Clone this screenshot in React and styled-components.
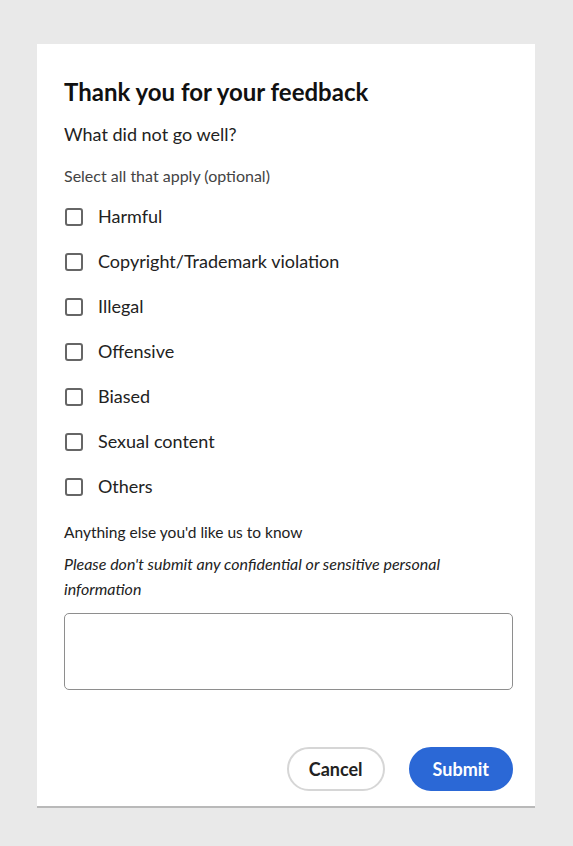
import React from 'react'
import styled, { createGlobalStyle } from 'styled-components'

const Global = createGlobalStyle`
  body {
    margin: 0;
    background: #e9e9e9;
    font-family: Lato, "Open Sans", sans-serif;
    color: #222;
  }
`

const Page = styled.div`
  padding: 44px 38px 0 37px;
`

const Card = styled.div`
  background: #fff;
  width: 498px;
  box-sizing: border-box;
  padding: 33px 22px 15px 27px;
  border-bottom: 2px solid #b9b9b9;
`

const Title = styled.h1`
  margin: 0;
  font-size: 24px;
  line-height: 30px;
  font-weight: 700;
  color: #111;
`

const Question = styled.div`
  margin-top: 15px;
  font-size: 18px;
  line-height: 24px;
`

const Hint = styled.div`
  margin-top: 20px;
  font-size: 16px;
  line-height: 20px;
  color: #444;
`

const List = styled.div`
  display: flex;
  flex-direction: column;
  gap: 20px;
  margin-top: 18px;
`

const Row = styled.label`
  display: flex;
  align-items: center;
  gap: 15px;
  font-size: 18px;
  line-height: 25px;
  color: #222;
`

const Box = styled.span`
  width: 18px;
  height: 18px;
  box-sizing: border-box;
  border: 2px solid #666;
  border-radius: 3px;
  margin-left: 1px;
`

const Label = styled.div`
  margin-top: 22px;
  font-size: 15.5px;
  line-height: 22px;
`

const Note = styled.div`
  margin-top: 8px;
  max-width: 400px;
  font-size: 16px;
  line-height: 25px;
  font-style: italic;
`

const TextArea = styled.div`
  margin-top: 12px;
  height: 77px;
  box-sizing: border-box;
  border: 1.5px solid #8e8e8e;
  border-radius: 5px;
`

const Footer = styled.div`
  display: flex;
  justify-content: flex-end;
  gap: 24px;
  margin-top: 57px;
`

const Button = styled.button`
  height: 44px;
  padding: 0 ${p => (p.primary ? 22 : 20)}px;
  border-radius: 22px;
  font-family: inherit;
  font-size: 18px;
  font-weight: 700;
  border: 2px solid ${p => (p.primary ? '#2b68d6' : '#d6d6d6')};
  background: ${p => (p.primary ? '#2b68d6' : '#fff')};
  color: ${p => (p.primary ? '#fff' : '#222')};
`

const options = [
  'Harmful',
  'Copyright/Trademark violation',
  'Illegal',
  'Offensive',
  'Biased',
  'Sexual content',
  'Others',
]

export default function App() {
  return (
    <Page>
      <Global />
      <Card>
        <Title>Thank you for your feedback</Title>
        <Question>What did not go well?</Question>
        <Hint>Select all that apply (optional)</Hint>
        <List>
          {options.map(o => (
            <Row key={o}>
              <Box />
              {o}
            </Row>
          ))}
        </List>
        <Label>Anything else you'd like us to know</Label>
        <Note>Please don't submit any confidential or sensitive personal information</Note>
        <TextArea />
        <Footer>
          <Button>Cancel</Button>
          <Button primary>Submit</Button>
        </Footer>
      </Card>
    </Page>
  )
}
